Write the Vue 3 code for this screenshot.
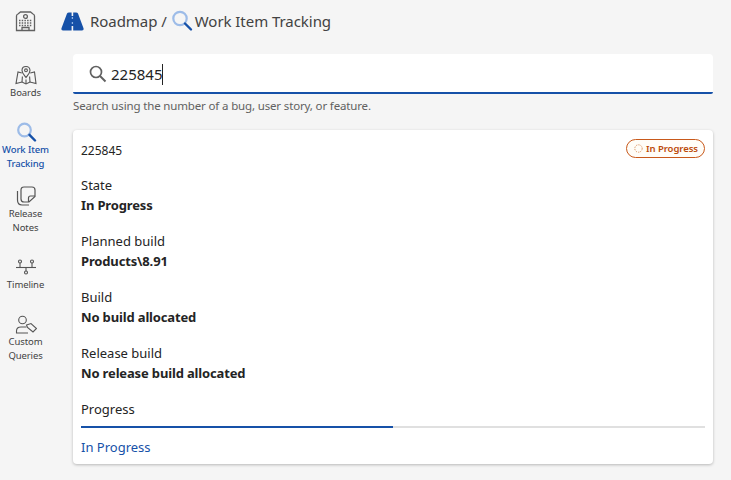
<script setup>
const fields = [
  { label: "State", value: "In Progress" },
  { label: "Planned build", value: "Products\\8.91" },
  { label: "Build", value: "No build allocated" },
  { label: "Release build", value: "No release build allocated" },
];
</script>

<template>
  <div class="app">
    <header class="topbar">
      <svg class="home" width="21" height="21" viewBox="0 0 21 21" fill="none" stroke="#616161" stroke-width="1.300">
        <path d="M1.500 5 Q1.500 3.500 3 3 L5.500 1 H15.500 L18 3 Q19.500 3.500 19.500 5 V19.500 H1.500 Z" />
        <circle cx="10.500" cy="5.500" r="1.900" />
        <path d="M4 9.500h13M4 12h13M4 14.500h13" stroke-dasharray="1.500 1.200" stroke-width="1.500" />
        <path d="M7 19.500v-3h7v3" />
      </svg>
      <div class="crumbs">
        <svg class="road" width="23" height="19" viewBox="0 0 23 19">
          <path d="M6 1.500 Q6.500 0.500 8 0.500 H10.600 V4 H12.200 V0.500 H15 Q16.500 0.500 17 1.500 L22.600 16.500 Q23 18.500 21 18.500 H12.200 V14 H10.600 V18.500 H2 Q0 18.500 0.400 16.500 Z" fill="#1651a8" />
          <path d="M10.700 6.500h1.500v5h-1.500z" fill="#1651a8" />
          <path d="M11.400 5v2M11.400 10v2" stroke="#8fb2e4" stroke-width="1.300" />
        </svg>
        <span>Roadmap /</span>
        <svg class="glass" width="22" height="22" viewBox="0 0 22 22" fill="none">
          <circle cx="9" cy="8.500" r="6.700" stroke="#9dbce8" stroke-width="2.200" />
          <path d="M14 13.500 L20 19.500" stroke="#1651a8" stroke-width="2.400" stroke-linecap="round" />
        </svg>
        <span>Work Item Tracking</span>
      </div>
    </header>

    <div class="body">
      <nav class="sidebar">
        <div class="nav-item">
          <svg width="22" height="20" viewBox="0 0 22 20" fill="none" stroke="#555" stroke-width="1.100">
            <path d="M6.800 8 L3 7 L1 18.500 L7 17 L11 19 L15 17 L21 18.500 L19.500 7 L15.200 8" />
            <path d="M11 1.500 C8.500 1.500 7 3.400 7 5.400 C7 8 9.700 10.500 11 12.500 C12.300 10.500 15 8 15 5.400 C15 3.400 13.500 1.500 11 1.500 Z" />
            <circle cx="11" cy="5.300" r="1.400" />
            <path d="M7 17 L7.400 11.500M15 17 L14.600 11.500M11 19V14.500" />
          </svg>
          <span>Boards</span>
        </div>
        <div class="nav-item active">
          <svg width="22" height="20" viewBox="0 0 22 20" fill="none">
            <circle cx="9.500" cy="8" r="6.300" stroke="#9dbce8" stroke-width="2.200" />
            <path d="M14.500 12.800 L20 18.500" stroke="#1651a8" stroke-width="2.400" stroke-linecap="round" />
          </svg>
          <span>Work Item Tracking</span>
        </div>
        <div class="nav-item">
          <svg width="22" height="20" viewBox="0 0 22 20" fill="none" stroke="#555" stroke-width="1.200">
            <path d="M6 4 Q6 1 9 1 H17 Q20 1 20 4 V10.500 L14 16 H9 Q6 16 6 13 Z" />
            <path d="M20 10 H15.500 Q13.500 10 13.500 12 V16" />
            <path d="M2.500 5 V14 Q2.500 19 7 19 H14" />
          </svg>
          <span>Release Notes</span>
        </div>
        <div class="nav-item">
          <svg width="22" height="20" viewBox="0 0 22 20" fill="none" stroke="#555" stroke-width="1.100">
            <path d="M1 10.500 H21" />
            <circle cx="5" cy="4.500" r="1.500" />
            <circle cx="17" cy="4.500" r="1.500" />
            <circle cx="11" cy="15.500" r="1.500" />
            <path d="M5 6 V10.500 M17 6 V10.500 M11 10.500 V14" />
          </svg>
          <span>Timeline</span>
        </div>
        <div class="nav-item">
          <svg width="22" height="20" viewBox="0 0 22 20" fill="none" stroke="#555" stroke-width="1.100">
            <circle cx="7.500" cy="6" r="3.800" />
            <path d="M11.500 13 H6 Q1.500 13 1.500 17 V19 H13" />
            <path d="M11.500 11 L16 9.500 L21.500 14.500 L18 18 L12.500 13.500 Z" />
          </svg>
          <span>Custom Queries</span>
        </div>
      </nav>

      <main class="content">
        <div class="search">
          <svg width="18" height="18" viewBox="0 0 18 18" fill="none" stroke="#616161">
            <circle cx="7" cy="7" r="5.500" stroke-width="1.700" />
            <path d="M11 11 L16.500 16.500" stroke-width="1.900" />
          </svg>
          <span class="query">225845</span><span class="caret"></span>
        </div>
        <p class="hint">Search using the number of a bug, user story, or feature.</p>

        <section class="card">
          <div class="card-head">
            <span class="id">225845</span>
            <span class="badge">
              <svg width="9" height="9" viewBox="0 0 9 9" fill="none">
                <circle cx="4.500" cy="4.500" r="3.700" stroke="#d9925f" stroke-width="1" stroke-dasharray="1.300 1.100" />
              </svg>
              In Progress
            </span>
          </div>
          <div v-for="f in fields" :key="f.label" class="field">
            <div class="label">{{ f.label }}</div>
            <div class="value">{{ f.value }}</div>
          </div>
          <div class="label">Progress</div>
          <div class="track"><div class="fill" :style="{ width: '50%' }"></div></div>
          <div class="status">In Progress</div>
        </section>
      </main>
    </div>
  </div>
</template>

<style>
html, body {
  margin: 0;
  background: #f5f5f5;
}
</style>

<style scoped>
.app {
  width: 731px;
  height: 480px;
  overflow: hidden;
  background: #f5f5f5;
  font-family: "Noto Sans", "Open Sans", sans-serif;
  color: #242424;
}
.topbar {
  display: flex;
  align-items: center;
  height: 44px;
  padding: 0 0 2px 15px;
  box-sizing: border-box;
}
.crumbs {
  display: flex;
  align-items: center;
  margin-left: 25px;
  font-size: 15px;
  letter-spacing: -0.05px;
  color: #424242;
}
.road {
  margin-right: 6px;
}
.glass {
  margin: 0 2px 0 4px;
}
.body {
  display: flex;
}
.sidebar {
  width: 51px;
  display: flex;
  flex-direction: column;
  align-items: center;
  padding-top: 21px;
}
.nav-item {
  width: 51px;
  margin-bottom: 22px;
  display: flex;
  flex-direction: column;
  align-items: center;
  text-align: center;
  font-size: 9.500px;
  line-height: 14px;
  color: #424242;
  letter-spacing: -0.1px;
}
.nav-item svg {
  display: block;
  margin-bottom: 1px;
}
.nav-item.active {
  color: #1651a8;
  font-weight: 500;
  margin-bottom: 15px;
}
.content {
  margin-left: 22px;
  width: 640px;
  padding-top: 10px;
}
.search {
  display: flex;
  align-items: center;
  height: 40px;
  box-sizing: border-box;
  padding: 2px 0 0 16px;
  background: #fff;
  border-bottom: 2px solid #1651a8;
  border-radius: 4px 4px 2px 2px;
  font-size: 15px;
  color: #242424;
}
.query {
  margin-left: 4px;
}
.caret {
  width: 1px;
  height: 21px;
  background: #242424;
}
.hint {
  margin: 3px 0 16px;
  font-size: 11.500px;
  line-height: 17px;
  letter-spacing: -0.15px;
  color: #616161;
}
.card {
  height: 334px;
  box-sizing: border-box;
  padding: 9px 8px 0;
  background: #fff;
  border-radius: 4px;
  box-shadow: 0 1px 3px rgba(0, 0, 0, 0.25);
  font-size: 13px;
  line-height: 20px;
}
.card-head {
  display: flex;
  justify-content: space-between;
  align-items: flex-start;
  height: 20px;
  margin-bottom: 16px;
}
.id {
  font-size: 12px;
  padding-top: 2px;
}
.badge {
  display: flex;
  align-items: center;
  gap: 3px;
  height: 19px;
  box-sizing: border-box;
  padding: 0 6px 0 7px;
  border: 1px solid #c8591b;
  border-radius: 10px;
  background: #fffdf8;
  color: #bc4b09;
  font-size: 9.500px;
  font-weight: 600;
  letter-spacing: -0.05px;
}
.field {
  margin-bottom: 16px;
}
.value {
  font-weight: 700;
  letter-spacing: -0.15px;
}
.track {
  height: 2px;
  margin-top: 7px;
  background: #e0e0e0;
}
.fill {
  height: 100%;
  background: #1651a8;
}
.status {
  margin-top: 9px;
  color: #1651a8;
}
</style>
